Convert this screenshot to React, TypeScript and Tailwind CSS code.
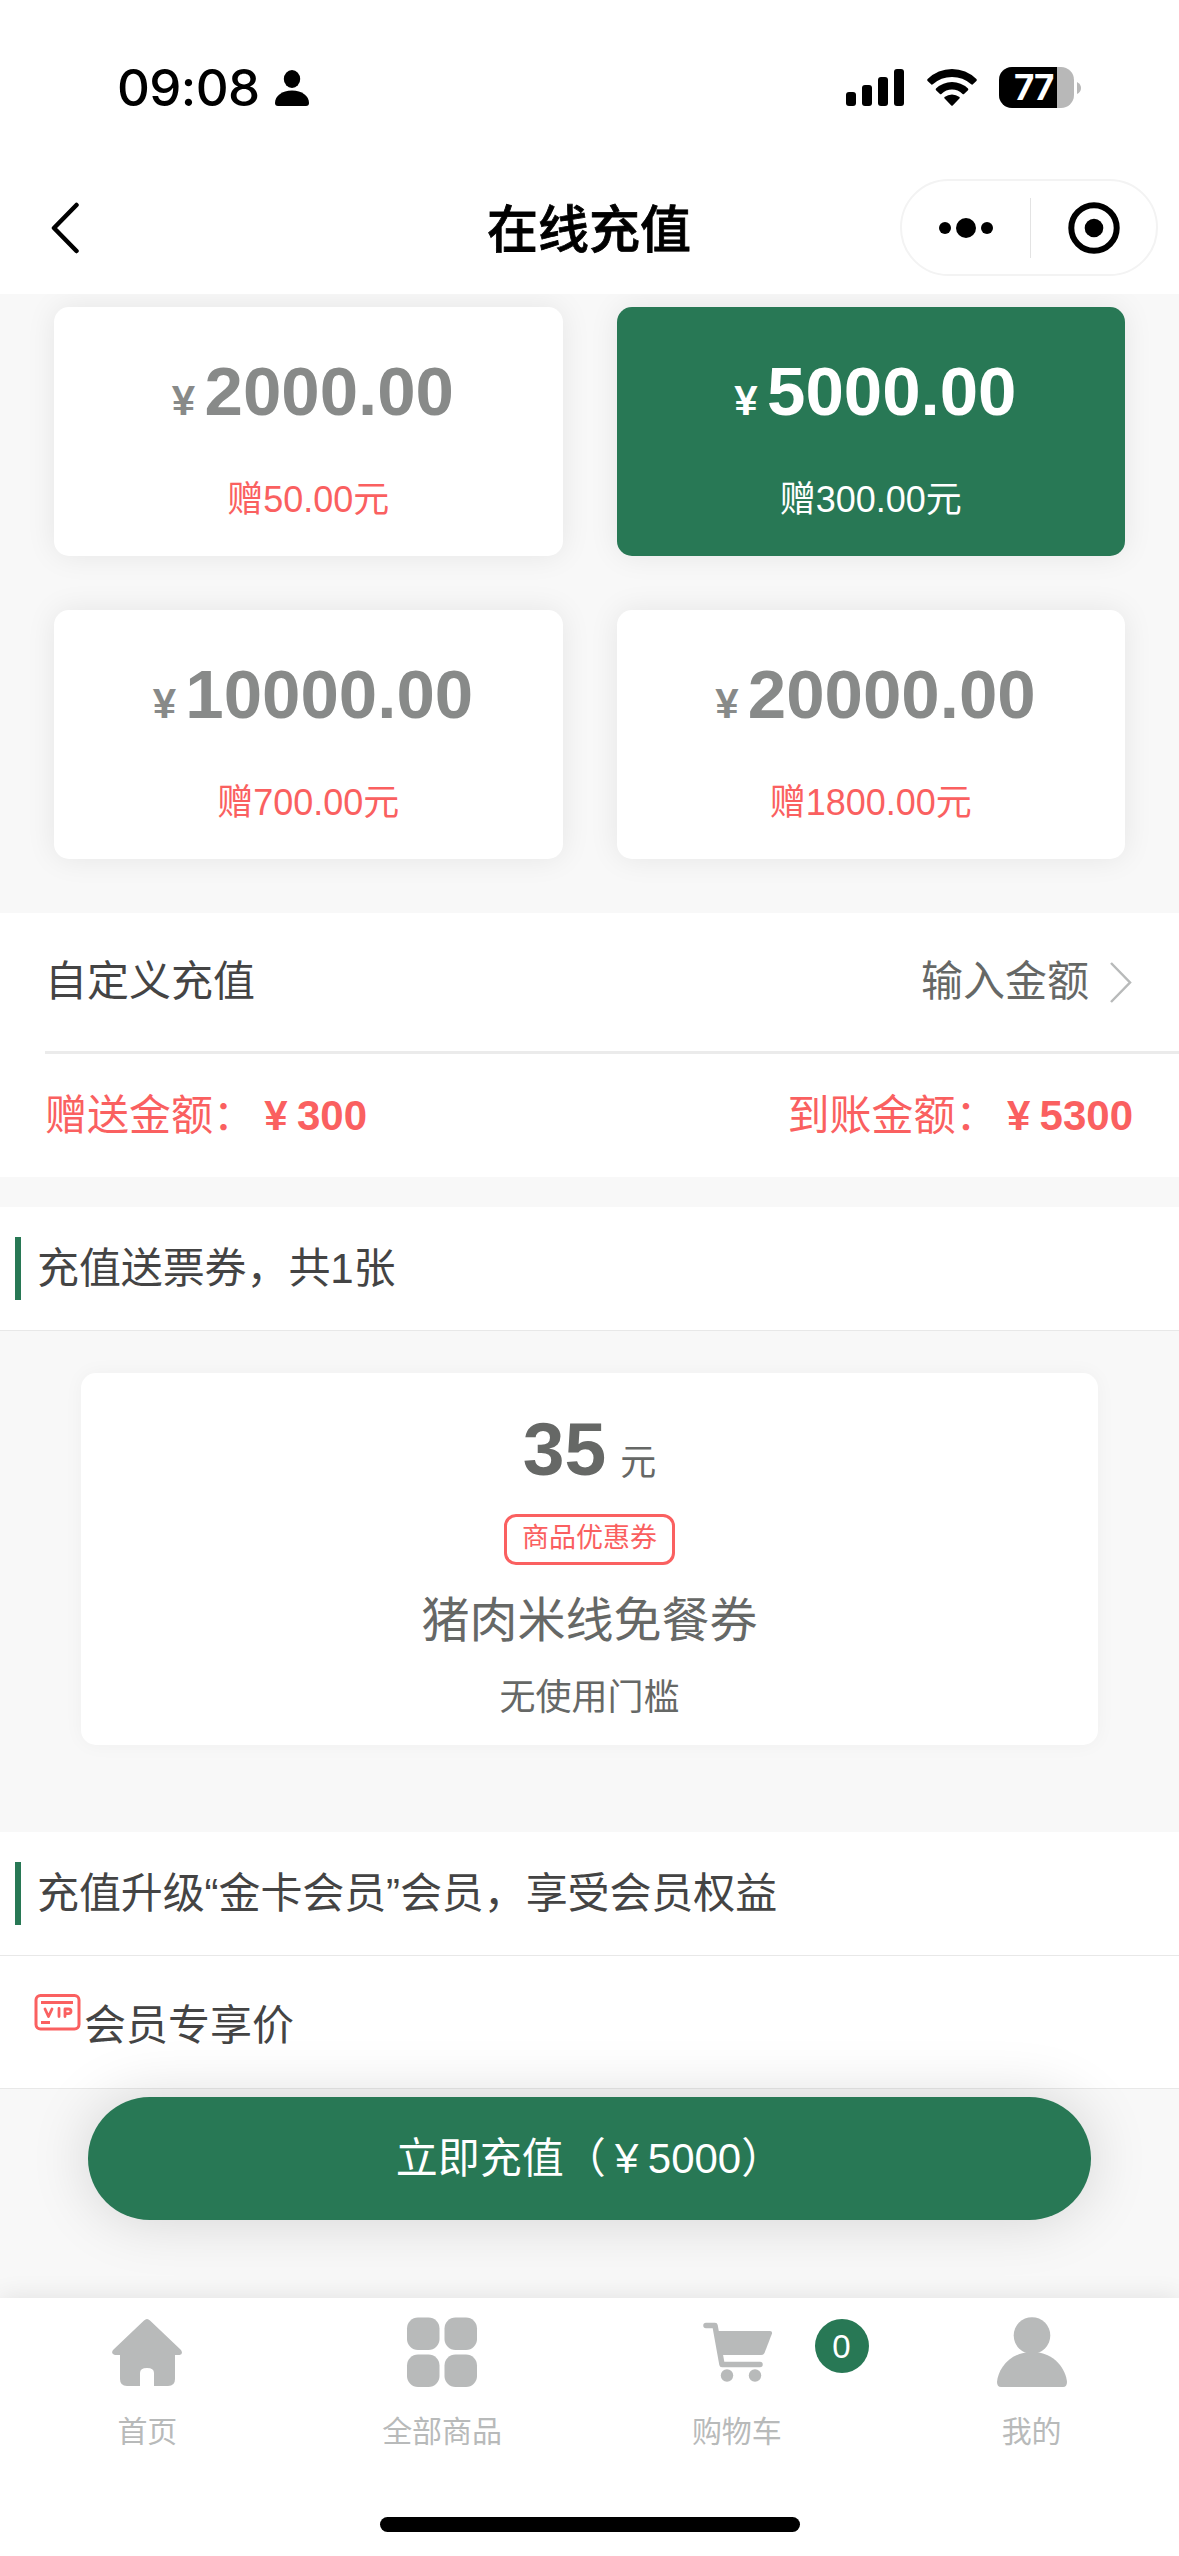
import { useState } from "react";
import { clsx } from "clsx";

interface Plan {
  amount: number;
  gift: number;
}

const PLANS: Plan[] = [
  { amount: 2000, gift: 50 },
  { amount: 5000, gift: 300 },
  { amount: 10000, gift: 700 },
  { amount: 20000, gift: 1800 },
];

function StatusBar() {
  return (
    <div className="flex h-[156px] items-start justify-between pt-[67px] pr-[98px] pl-[117px]">
      <div className="flex items-center font-['Inter',sans-serif]">
        <span className="w-[158px] text-[51px] leading-[42px] font-[550] tracking-[-0.6px]">09:08</span>
        <svg className="h-[36px] w-[34px]" viewBox="0 0 34 36">
          <ellipse cx="17" cy="9" rx="8.2" ry="9" />
          <path d="M0 33C0 26 7 20.5 17 20.5S34 26 34 33Q34 36 31 36H3Q0 36 0 33Z" />
        </svg>
      </div>
      <div className="flex items-center">
        <svg className="mr-[22px] h-[37px] w-[59px]" viewBox="0 0 59 37">
          <rect x="0" y="23" width="10" height="14" rx="3" />
          <rect x="16" y="16" width="10" height="21" rx="3" />
          <rect x="32" y="8" width="10" height="29" rx="3" />
          <rect x="48" y="0" width="10" height="37" rx="3" />
        </svg>
        <svg className="mr-[22px] h-[37px] w-[50px]" viewBox="0 0 50 37">
          <path d="M.6 10Q-.2 11 .6 12L4.4 15.5Q5 16 5.8 15.3Q14 8 25 8T44.2 15.3Q45 16 45.6 15.5L49.4 12Q50.2 11 49.4 10Q39 0 25 0T.6 10Z" />
          <path d="M9 19.5Q8.3 20.5 9 21.2L13 25Q13.7 25.5 14.4 24.9Q19 20.5 25 20.5T35.6 24.9Q36.3 25.5 37 25L41 21.2Q41.7 20.5 41 19.5Q34 13 25 13T9 19.5Z" />
          <path d="M17.5 28Q17 29 17.6 29.6L24.3 36.5Q25 37.2 25.7 36.5L32.4 29.6Q33 29 32.5 28Q29 25.5 25 25.5T17.5 28Z" />
        </svg>
        <div className="relative flex h-[41px] w-[75px] items-center overflow-hidden rounded-[13px] bg-[#b8b8b8]">
          <div className="h-full w-[58px] bg-black" />
          <span className="absolute top-0 left-[15px] font-['Inter',sans-serif] text-[35px] leading-[41px] font-bold tracking-[-1px] text-white">
            77
          </span>
        </div>
        <svg className="ml-[3px] h-[12px] w-[4px]" viewBox="0 0 4 12">
          <path d="M0 0Q4 2 4 6T0 12Z" fill="#b8b8b8" />
        </svg>
      </div>
    </div>
  );
}

function NavBar() {
  return (
    <div className="grid h-[138px] grid-cols-3 items-start pr-[21px] pl-[51px]">
      <svg className="mt-[46px] h-[52px] w-[28px]" viewBox="0 0 28 52" fill="none" stroke="black" strokeWidth="4.5" strokeLinecap="round" strokeLinejoin="round">
        <path d="M25.5 3L3 26L25.5 49" />
      </svg>
      <h1 className="-ml-[31px] pt-[45px] text-center text-[51px] leading-[60px] font-medium [-webkit-text-stroke:0.8px_black]">
        在线充值
      </h1>
      <div className="mt-[23px] flex h-[97px] w-[258px] items-center justify-self-end rounded-full border-2 border-[#f3f3f3]">
        <div className="flex w-[128px] items-center justify-center gap-[5px]">
          <i className="size-[12px] rounded-full bg-black" />
          <i className="size-[20px] rounded-full bg-black" />
          <i className="size-[12px] rounded-full bg-black" />
        </div>
        <div className="h-[60px] w-px bg-[#e3e3e3]" />
        <div className="flex flex-1 justify-center pl-px">
          <svg className="size-[52px]" viewBox="0 0 52 52">
            <circle cx="26" cy="26" r="22.7" fill="none" stroke="black" strokeWidth="6" />
            <circle cx="26" cy="26" r="9.3" />
          </svg>
        </div>
      </div>
    </div>
  );
}

// Narrow yen glyph centred in a full-width cell
function Yen() {
  return <span className="inline-block w-[42px] text-center text-[42px]">¥</span>;
}

function PlanCard({ plan, active, onSelect }: { plan: Plan; active: boolean; onSelect: () => void }) {
  return (
    <button
      type="button"
      onClick={onSelect}
      className={clsx(
        "flex h-[249px] flex-col items-center rounded-[15px] pt-[42px] shadow-[0_0_30px_rgba(0,0,0,0.08)]",
        active ? "bg-[#287855] text-white" : "bg-white text-[#888a89]",
      )}
    >
      <span className="flex items-baseline leading-[86px] font-bold">
        <Yen />
        <span className="text-[69px]">{plan.amount.toFixed(2)}</span>
      </span>
      <span className={clsx("mt-[31px] text-[36px] leading-[50px]", !active && "text-[#fa6060]")}>
        赠{plan.gift.toFixed(2)}元
      </span>
    </button>
  );
}

function SectionTitle({ children }: { children: string }) {
  return (
    <div className="flex h-[124px] items-center border-b border-[#e8e8e8] bg-white pl-[15px]">
      <span className="mr-[16px] h-[63px] w-[6px] bg-[#287855]" />
      <h2 className="text-[42px] leading-[60px] tracking-[-0.1px]">{children}</h2>
    </div>
  );
}

function CouponCard() {
  return (
    <div className="mx-[81px] mt-[42px] flex h-[372px] flex-col items-center rounded-[15px] bg-white text-[#666866] shadow-[0_0_20px_rgba(0,0,0,0.04)]">
      <div className="mt-[31px] flex h-[90px] items-baseline gap-[14px] leading-[90px]">
        <span className="text-[75px] font-bold">35</span>
        <span className="text-[36px]">元</span>
      </div>
      <div className="mt-[20px] flex h-[51px] w-[171px] items-center justify-center rounded-[12px] border-3 border-[#fa6060] pb-[3px] text-[27px] leading-[36px] text-[#fa6060]">
        商品优惠券
      </div>
      <p className="mt-[24px] text-[48px] leading-[64px]">猪肉米线免餐券</p>
      <p className="mt-[20px] text-[36px] leading-[50px]">无使用门槛</p>
    </div>
  );
}

function VipIcon() {
  return (
    <svg className="h-[37px] w-[47px]" viewBox="0 0 47 37" fill="none" stroke="#fa6060" strokeLinecap="round" strokeLinejoin="round">
      <rect x="2" y="1.5" width="43" height="33.5" rx="4.5" strokeWidth="3" />
      <path d="M7 8.5H39M7 28.5H16" strokeWidth="3" strokeLinecap="butt" />
      <path d="M11 15L14.5 22.5L18 15M25 14.5V22.5M31 22.5V15H34.5Q37 15 37 17.3T34.5 19.6H31" strokeWidth="2.8" />
    </svg>
  );
}

const HomeIcon = () => (
  <svg className="size-[72px]" viewBox="0 0 72 72" fill="currentColor">
    <path d="M33 4.5Q36 1.5 39 4.5L70 34Q72.500 38 68.500 39H64V63Q64 70 57 70H43V57Q43 52 36 52T29 57V70H16Q9 70 9 63V39H4Q-.5 38 2 34Z" />
  </svg>
);

const GridIcon = () => (
  <svg className="size-[72px]" viewBox="0 0 72 72" fill="currentColor">
    <rect x="1" y="1.5" width="32.5" height="32.5" rx="11" />
    <rect x="38.5" y="1.5" width="32.5" height="32.5" rx="11" />
    <rect x="1" y="38.5" width="32.5" height="32.5" rx="11" />
    <rect x="38.5" y="38.5" width="32.5" height="32.5" rx="11" />
  </svg>
);

const CartIcon = () => (
  <svg className="size-[72px]" viewBox="0 0 72 72" fill="currentColor">
    <path d="M5 9.5H14L21 48.5H59" fill="none" stroke="currentColor" strokeWidth="5.5" strokeLinecap="round" strokeLinejoin="round" />
    <path d="M15 15H69Q71.5 15 71 17.5L63.5 37Q62.5 39 60 39H19Z" />
    <circle cx="26" cy="59.5" r="6.2" />
    <circle cx="54" cy="59.5" r="6.2" />
  </svg>
);

const UserIcon = () => (
  <svg className="size-[72px]" viewBox="0 0 72 72" fill="currentColor">
    <circle cx="36" cy="19.5" r="18.3" />
    <path d="M1 66C2 54 13 36 36 36S70 54 71 66Q71 71 67 71H5Q1 71 1 66Z" />
  </svg>
);

const TABS = [
  { label: "首页", Icon: HomeIcon },
  { label: "全部商品", Icon: GridIcon },
  { label: "购物车", Icon: CartIcon, badge: 0 },
  { label: "我的", Icon: UserIcon },
];

function TabBar() {
  return (
    <nav className="relative flex h-[258px] flex-col items-center bg-white shadow-[0_0_24px_rgba(0,0,0,0.1)]">
      <div className="grid w-full grid-cols-4 text-[#b8baba]">
        {TABS.map(({ label, Icon, badge }) => (
          <div key={label} className="relative flex flex-col items-center pt-[18px]">
            <Icon />
            <span className="mt-[23px] text-[30px] leading-[42px]">{label}</span>
            {badge !== undefined && (
              <span className="absolute top-[21px] left-[225px] flex size-[54px] items-center justify-center rounded-full bg-[#287855] text-[33px] leading-none text-white">
                {badge}
              </span>
            )}
          </div>
        ))}
      </div>
      <div className="mt-[64px] h-[15px] w-[420px] rounded-full bg-black" />
    </nav>
  );
}

export default function App() {
  const [selected, setSelected] = useState(1);
  const plan = PLANS[selected];

  return (
    <div
      lang="zh-CN"
      className="flex h-[2556px] w-[1179px] flex-col overflow-hidden bg-[#f8f8f8] font-['Liberation_Sans','Noto_Sans_CJK_SC',sans-serif] text-[#444]"
    >
      <header className="relative z-10 h-[294px] shrink-0 bg-white text-black">
        <StatusBar />
        <NavBar />
      </header>

      <main className="flex-1">
        <div className="grid grid-cols-2 gap-[54px] px-[54px] pt-[13px] pb-[54px]">
          {PLANS.map((item, i) => (
            <PlanCard key={item.amount} plan={item} active={i === selected} onSelect={() => setSelected(i)} />
          ))}
        </div>

        <section className="bg-white pl-[45px] text-[42px] leading-[60px]">
          <div className="flex h-[141px] items-center justify-between border-b-3 border-[#ebebeb] pr-[47px]">
            <span>自定义充值</span>
            <span className="flex items-center text-[#666866]">
              输入金额
              <svg className="ml-[20px] h-[42px] w-[23px]" viewBox="0 0 23 42" fill="none" stroke="#b8baba" strokeWidth="2.5">
                <path d="M2 2L21 21.5L2 41" />
              </svg>
            </span>
          </div>
          <div className="flex h-[123px] items-center justify-between pr-[46px] text-[#fa6060]">
            <span>赠送金额：<b><Yen />{plan.gift}</b></span>
            <span>到账金额：<b><Yen />{plan.amount + plan.gift}</b></span>
          </div>
        </section>

        <section className="mt-[30px]">
          <SectionTitle>充值送票券，共1张</SectionTitle>
          <CouponCard />
        </section>

        <section className="mt-[87px]">
          <SectionTitle>充值升级“金卡会员”会员，享受会员权益</SectionTitle>
          <div className="flex h-[133px] items-start border-b border-[#e8e8e8] bg-white pt-[38px] pl-[34px]">
            <VipIcon />
            <span className="ml-[3px] text-[42px] leading-[64px]">会员专享价</span>
          </div>
        </section>

        <button
          type="button"
          className="mx-[88px] mt-[8px] flex h-[123px] w-[1003px] items-center justify-center rounded-full bg-[#287855] text-[42px] leading-[60px] text-white shadow-[0_0_60px_rgba(0,0,0,0.15)]"
        >
          立即充值（<Yen />{plan.amount}）
        </button>
      </main>

      <TabBar />
    </div>
  );
}
